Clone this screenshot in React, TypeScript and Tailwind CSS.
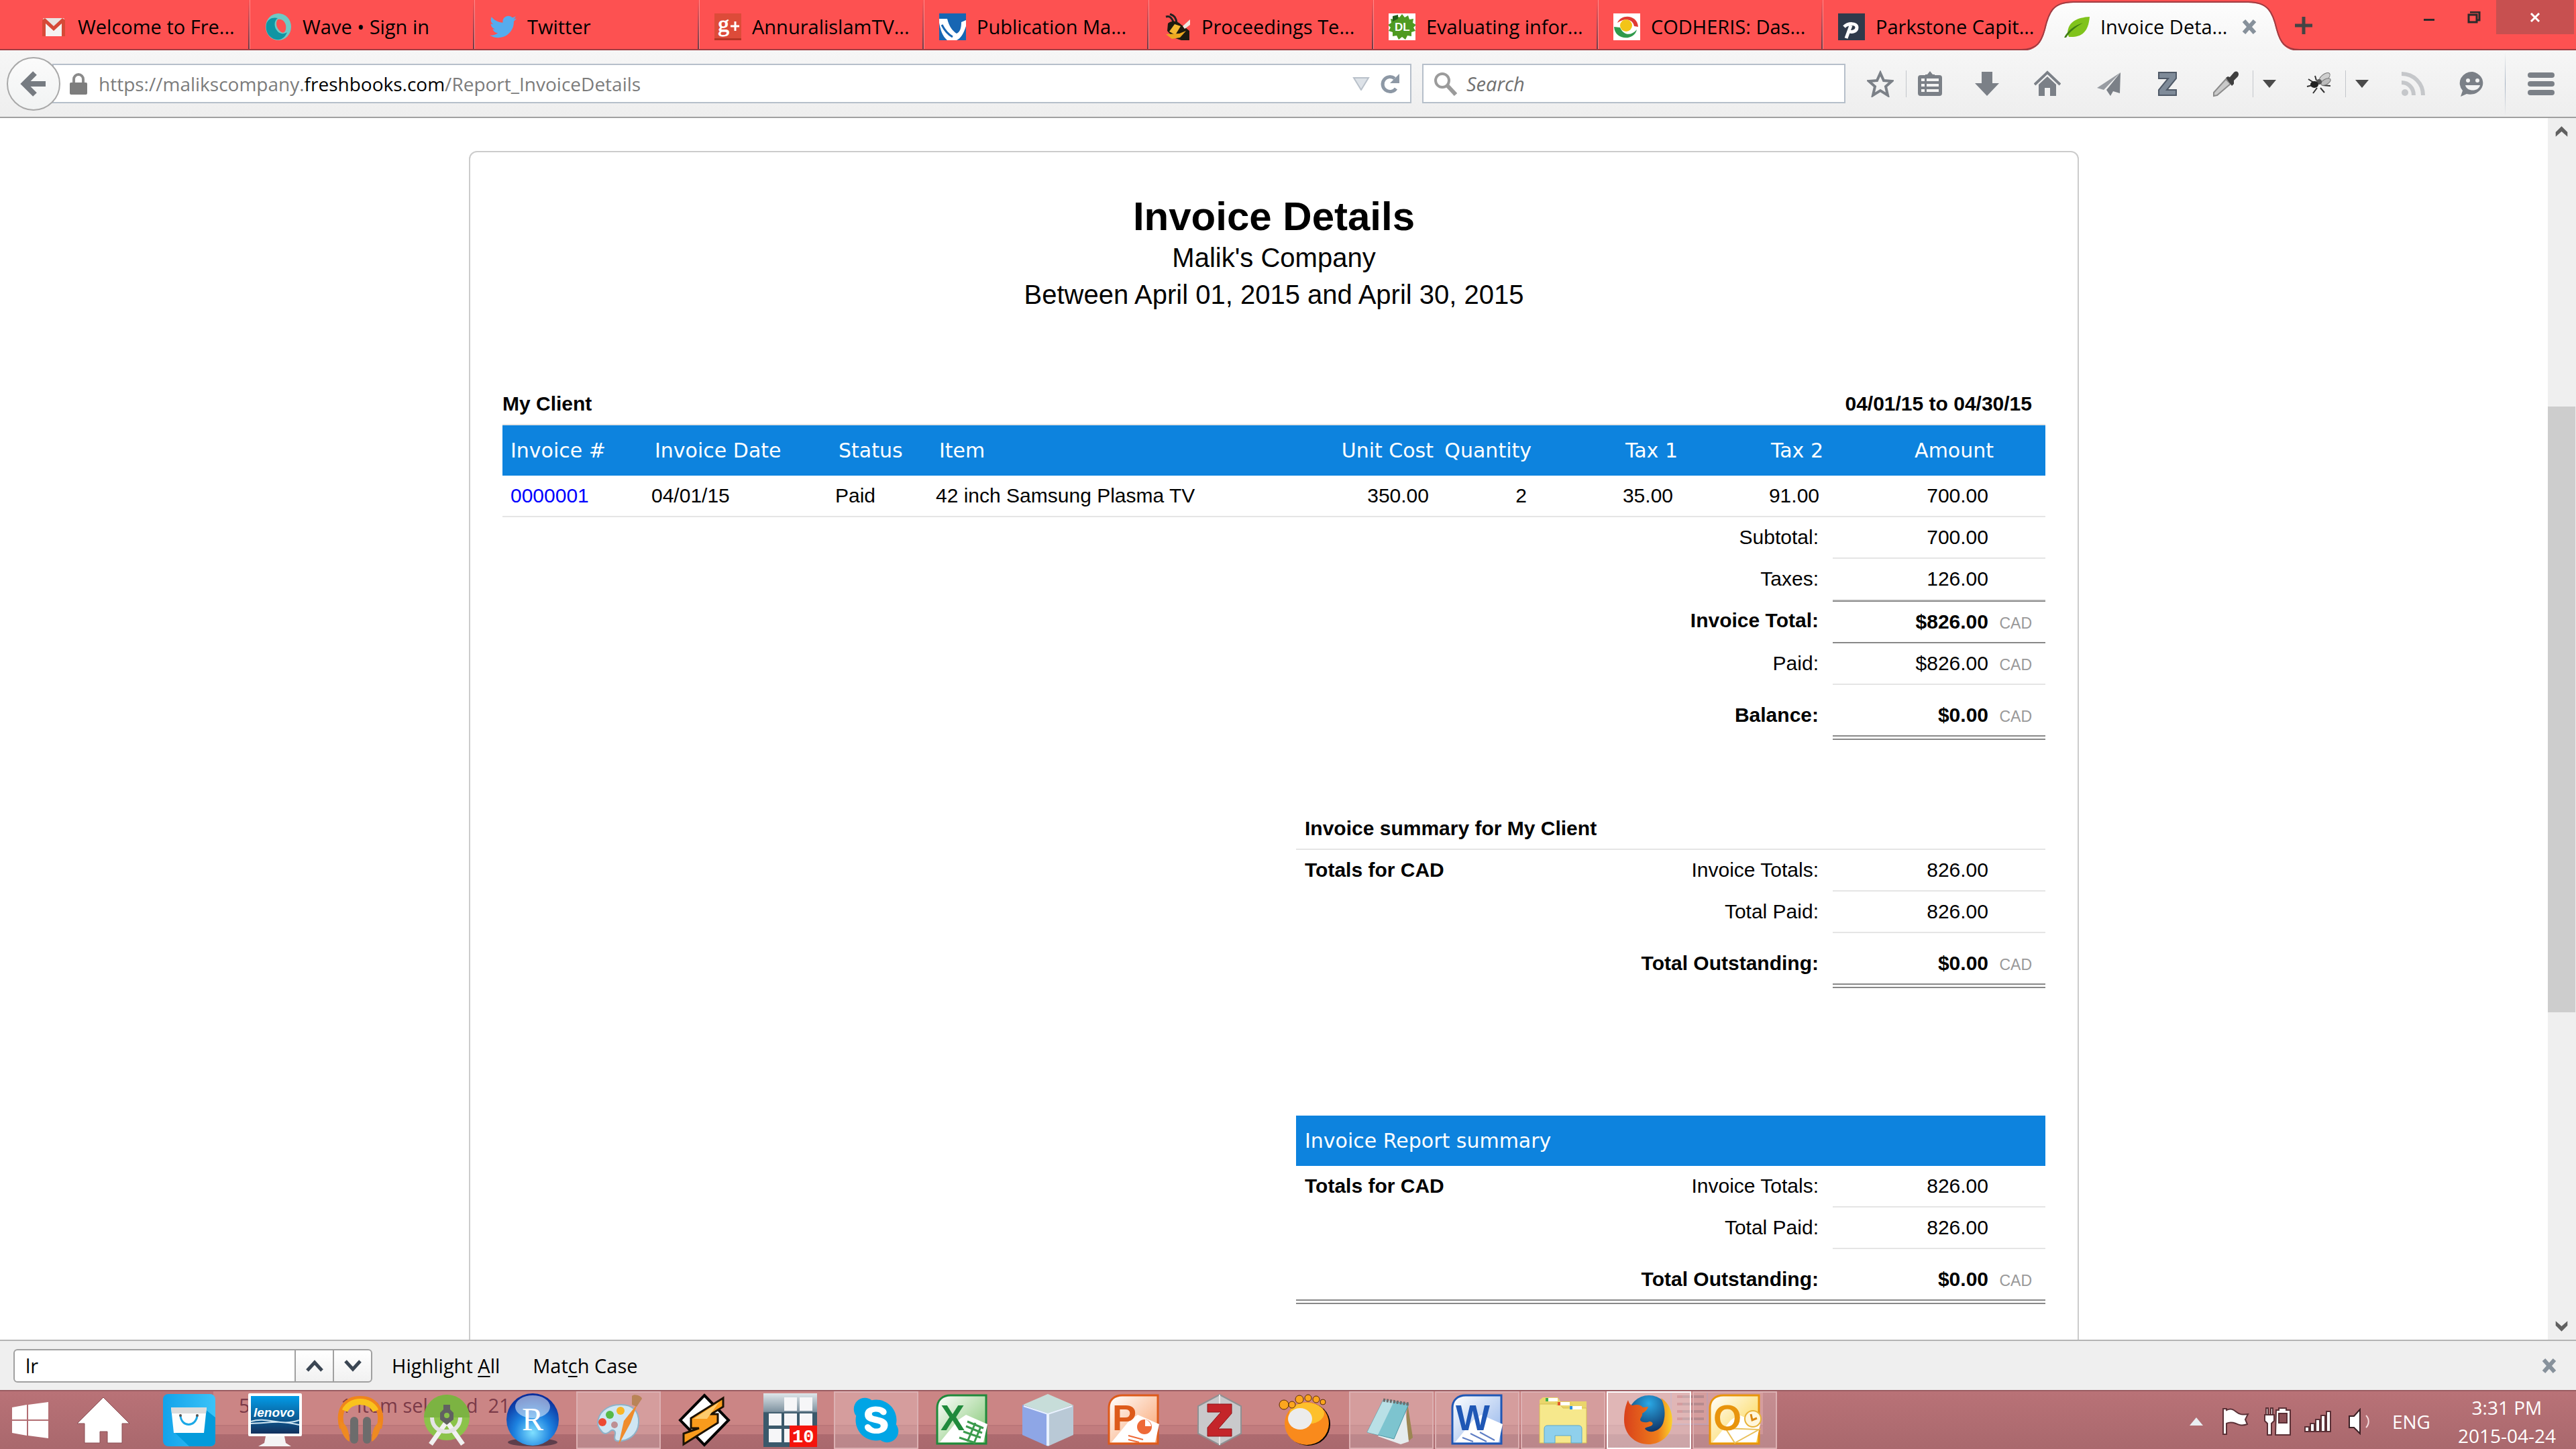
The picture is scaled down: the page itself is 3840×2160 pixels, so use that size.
import type { ReactNode } from "react";
import { FaSkype, FaTwitter } from "react-icons/fa";

const UI = "font-['Open_Sans','Segoe_UI',sans-serif]";

/* ---------- favicons ---------- */

function Fav({ children }: { children: ReactNode }) {
  return (
    <svg viewBox="0 0 40 40" className="size-10 shrink-0" aria-hidden="true">
      {children}
    </svg>
  );
}

const GmailIcon = (
  <Fav>
    <rect x="4" y="7" width="32" height="27" rx="2" fill="#e8e4e2" />
    <path d="M4 34V9l16 13L36 9v25H10V20l10 8 10-8v14z" fill="#f5f2f1" />
    <path d="M3 10l4-3 13 12L33 7l4 3v24h-5V15L20 26 8 15v19H3z" fill="#d64937" />
  </Fav>
);
const WaveIcon = (
  <Fav>
    <ellipse cx="20" cy="20" rx="19" ry="20" fill="#6fc9c5" />
    <path d="M2 16C4 8 12 5 19 7c-6 4-6 14 0 20 4 4 10 4 14 1-3 8-9 12-16 11C6 37 0 27 2 16z" fill="#0f95a3" />
    <path d="M19 9c8-2 14 6 12 15-1 5-5 6-8 3-6-5-8-13-4-18z" fill="#fd5151" />
  </Fav>
);
const GPlusIcon = (
  <Fav>
    <rect width="40" height="40" fill="#dd4b39" />
    <rect y="37" width="40" height="3" fill="#b73525" />
    <text x="5" y="27" fontFamily="Liberation Serif, serif" fontSize="34" fill="#fff" stroke="#fff">g</text>
    <path d="M24 19h13M31 12v14" stroke="#fff" strokeWidth="3" />
  </Fav>
);
const PubIcon = (
  <Fav>
    <rect width="40" height="40" fill="#1766b3" />
    <path d="M0 8h12c3 12 8 18 14 22 5-2 7-8 7-17l7-3v9c-4 12-8 18-14 21H12C5 34 2 25 0 14z" fill="#fff" />
    <path d="M4 17c4 8 9 14 16 18" stroke="#1766b3" strokeWidth="3" fill="none" />
  </Fav>
);
const BeeIcon = (
  <Fav>
    <path d="M3 5c6-2 9 2 12 10M9 1c7 2 9 6 10 13" stroke="#222" strokeWidth="3" fill="none" />
    <path d="M6 15c6-6 16-3 20 2l6 4 6 5v14H26l-12-4-9-10z" fill="#1d1a10" />
    <path d="M8 27l8-11 9 3-8 13z" fill="#f5b731" />
    <path d="M3 31l9 7 12-2 9-10-10 4z" fill="#eda81f" />
    <path d="M39 9L28 19l3 4 8-6z" fill="#ece9e2" />
  </Fav>
);
const DLIcon = (
  <Fav>
    <rect width="40" height="40" fill="#fff" />
    <path
      d="M20 1l4 5 5-3 2 6 6-1-1 6 5 3-4 4 3 5-6 2v6l-6-1-3 6-5-4-5 4-3-6-6 1v-6l-6-2 3-5-4-4 5-3-1-6 6 1 2-6 5 3z"
      fill="#4f9a22"
    />
    <path d="M6 4l8-2v6L6 12z" fill="#1f5d1b" />
    <text x="9" y="26" fontFamily="Liberation Sans, sans-serif" fontSize="17" fontWeight="700" fill="#fff">DL</text>
  </Fav>
);
const CodIcon = (
  <Fav>
    <rect width="40" height="40" fill="#fff" />
    <path d="M6 14C12 0 36 2 37 20l-6-1C29 8 17 6 6 14z" fill="#e03b34" />
    <path d="M1 20c1 20 30 22 34 4-8 10-20 9-25-3z" fill="#2f9a4c" />
    <circle cx="19" cy="18" r="9" fill="#f2c417" />
  </Fav>
);
const ParkIcon = (
  <Fav>
    <rect width="40" height="40" fill="#2f3a4b" />
    <path d="M9 20c6-6 19-6 19 1 0 6-8 8-13 5M19 18l-7 19" stroke="#fff" strokeWidth="5" fill="none" />
  </Fav>
);
const LeafIcon = (
  <Fav>
    <path d="M40 5C22 6 8 12 7 29l2 6c18 1 29-6 31-30z" fill="#80c31c" />
    <path d="M2 36C7 26 17 18 30 14 18 21 10 28 5 36z" fill="#3f7d14" />
  </Fav>
);

const TABS: { title: string; icon: ReactNode }[] = [
  { title: "Welcome to Fre...", icon: GmailIcon },
  { title: "Wave • Sign in", icon: WaveIcon },
  { title: "Twitter", icon: <FaTwitter className="size-10 shrink-0 text-[#55acee]" /> },
  { title: "AnnuralislamTV...", icon: GPlusIcon },
  { title: "Publication Ma...", icon: PubIcon },
  { title: "Proceedings Te...", icon: BeeIcon },
  { title: "Evaluating infor...", icon: DLIcon },
  { title: "CODHERIS: Das...", icon: CodIcon },
  { title: "Parkstone Capit...", icon: ParkIcon },
];

function CloseX() {
  return (
    <svg viewBox="0 0 24 24" className="size-6" aria-hidden="true">
      <path d="M4 3l16 18M20 3L4 21" stroke="#87919b" strokeWidth="6" />
    </svg>
  );
}

function TabStrip() {
  return (
    <header className="flex h-[75px] shrink-0 border-b-2 border-[#a03c42] bg-[#fd5151] pl-[38px]">
      <div className="flex" role="tablist">
        {TABS.map((t, i) => (
          <button key={t.title} role="tab" aria-selected="false" className="flex w-[335px] items-stretch">
            <span className="flex h-[80px] flex-1 items-center gap-4 pl-[22px] text-[29px] whitespace-nowrap text-black">
              {t.icon}
              {t.title}
            </span>
            {i < TABS.length - 1 && (
              <span className="h-[73px] w-[3px] border-r border-[#ff8a8a] bg-linear-to-b from-[#fd5151] via-[#b04a55] to-[#6b3c48]" />
            )}
          </button>
        ))}
        <div role="tab" aria-selected="true" className="relative z-10 flex h-[80px] w-[335px] items-center pl-[22px]">
          <svg
            viewBox="0 0 415 76"
            preserveAspectRatio="none"
            className="absolute top-0 -left-10 h-[76px] w-[415px]"
            aria-hidden="true"
          >
            <defs>
              <linearGradient id="tabFill" x1="0" y1="0" x2="0" y2="1">
                <stop offset="0" stopColor="#fdfdfd" />
                <stop offset="1" stopColor="#f5f5f5" />
              </linearGradient>
            </defs>
            <path
              d="M0 76C24 76 31 62 36 44C42 18 48 4 78 4H338C368 4 374 18 380 44C385 62 392 76 415 76z"
              fill="url(#tabFill)"
            />
            <path
              d="M0 74C24 74 30 62 35 44C41 18 47 3 78 3H338C368 3 375 18 381 44C386 62 392 74 415 74"
              fill="none"
              stroke="#a03c42"
              strokeWidth="2"
            />
          </svg>
          <span className="relative flex flex-1 items-center gap-4 text-[29px] whitespace-nowrap text-black">
            {LeafIcon}
            Invoice Deta...
          </span>
          <button aria-label="Close tab" className="relative mr-[23px]">
            <CloseX />
          </button>
        </div>
      </div>
      <button aria-label="New tab" className="ml-[32px] flex h-[76px] items-center">
        <svg viewBox="0 0 28 28" className="size-7" aria-hidden="true">
          <path d="M14 1v26M1 14h26" stroke="#444" strokeWidth="5" />
        </svg>
      </button>
      <div className="ml-auto flex h-[51px] pr-[3px]">
        <button aria-label="Minimize" className="flex w-[68px] items-center justify-center pt-2">
          <span className="h-[3px] w-4 bg-[#2a2a2a]" />
        </button>
        <button aria-label="Restore" className="flex w-[66px] items-center justify-center">
          <svg viewBox="0 0 20 18" className="h-[18px] w-5" aria-hidden="true">
            <path d="M4 1h14v12h-3M2 5h12v11H2z" fill="none" stroke="#2a2a2a" strokeWidth="3" />
          </svg>
        </button>
        <button aria-label="Close window" className="flex w-[116px] items-center justify-center bg-[#c75050]">
          <svg viewBox="0 0 16 14" className="h-[14px] w-4" aria-hidden="true">
            <path d="M2 1l12 12M14 1L2 13" stroke="#fff" strokeWidth="3" />
          </svg>
        </button>
      </div>
    </header>
  );
}

/* ---------- navigation bar ---------- */

const G = "#7b8087";

function Tool({ label, width, children }: { label: string; width: string; children: ReactNode }) {
  return (
    <button aria-label={label} className={`flex h-full shrink-0 items-center justify-center ${width}`}>
      <svg viewBox="0 0 40 40" className="size-10" aria-hidden="true">
        {children}
      </svg>
    </button>
  );
}

function Divider() {
  return <span className="h-10 w-px shrink-0 bg-[#c3c6cb]" />;
}

function Caret({ label }: { label: string }) {
  return (
    <button aria-label={label} className="flex h-full w-[47px] items-center justify-center">
      <svg viewBox="0 0 20 12" className="h-3 w-5" aria-hidden="true">
        <path d="M0 0h20L10 12z" fill="#4a4a4a" />
      </svg>
    </button>
  );
}

function NavBar() {
  return (
    <nav className="flex h-[101px] shrink-0 items-center border-b-2 border-[#a0a0a0] bg-linear-to-b from-[#f6f6f6] to-[#eeeeee]">
      <button
        aria-label="Back"
        className="relative z-10 ml-[10px] flex size-20 shrink-0 items-center justify-center rounded-full border-2 border-[#a8a8a8] bg-linear-to-b from-[#fbfbfb] to-[#f1f3f3]"
      >
        <svg viewBox="0 0 40 40" className="size-10" aria-hidden="true">
          <path d="M38 20H8M22 4L6 20l16 16" stroke="#767b81" strokeWidth="8" fill="none" />
        </svg>
      </button>
      <div className="-ml-3 flex h-[59px] flex-1 items-center border-2 border-[#b6bfca] bg-white pr-[14px] pl-[24px]">
        <svg viewBox="0 0 26 32" className="h-8 w-[26px] shrink-0" aria-hidden="true">
          <path d="M6 16V9a7 7 0 0114 0v7" fill="none" stroke="#8a8a8a" strokeWidth="4" />
          <rect y="14" width="26" height="18" rx="2" fill="#7d7d7d" />
        </svg>
        <div
          role="textbox"
          aria-label="Address"
          tabIndex={0}
          className="ml-[17px] flex-1 text-[28px] leading-[54px] whitespace-nowrap text-[#7c7c7c]"
        >
          https://malikscompany.<span className="text-black">freshbooks.com</span>/Report_InvoiceDetails
        </div>
        <button aria-label="Show history" className="mr-[14px]">
          <svg viewBox="0 0 26 20" className="h-5 w-[26px]" aria-hidden="true">
            <path d="M2 1h22L13 19z" fill="#dde2e8" stroke="#b9c1ca" strokeWidth="2" />
          </svg>
        </button>
        <button aria-label="Reload">
          <svg viewBox="0 0 32 32" className="size-8" aria-hidden="true">
            <path d="M25 23A11 11 0 1123 8" fill="none" stroke="#8d98a5" strokeWidth="5" />
            <path d="M30 1v14H16z" fill="#8d98a5" />
          </svg>
        </button>
      </div>
      <div className="ml-4 flex h-[59px] w-[631px] shrink-0 items-center border-2 border-[#b6bfca] bg-white pl-[14px]">
        <svg viewBox="0 0 36 36" className="size-9 shrink-0" aria-hidden="true">
          <circle cx="14" cy="13" r="10" fill="none" stroke="#9b9b9b" strokeWidth="4" />
          <path d="M21 20l13 14" stroke="#9b9b9b" strokeWidth="6" />
        </svg>
        <input
          type="search"
          aria-label="Search"
          placeholder="Search"
          className="ml-[14px] min-w-0 flex-1 bg-transparent text-[29px] italic outline-none placeholder:text-[#707070]"
        />
      </div>
      <div className="flex h-full shrink-0 items-center pl-[14px]">
        <Tool label="Bookmark" width="w-[76px]">
          <path d="M20 4l5 11 12 1-9 8 3 13-11-7-11 7 3-13-9-8 12-1z" fill="none" stroke={G} strokeWidth="4" />
        </Tool>
        <Divider />
        <Tool label="Bookmarks list" width="w-[70px]">
          <path d="M13 6h3l4-5 4 5h3v4H13z" fill={G} />
          <rect x="2" y="7" width="36" height="31" rx="4" fill={G} />
          <path d="M7 14h5M15 14h18M7 22h5M15 22h18M7 30h5M15 30h18" stroke="#f3f3f3" strokeWidth="4" />
        </Tool>
        <Tool label="Downloads" width="w-[100px]">
          <path d="M12 2h16v17h10L20 38 2 19h10z" fill={G} />
        </Tool>
        <Tool label="Home" width="w-20">
          <path d="M1 21L20 3l19 18" fill="none" stroke={G} strokeWidth="4" />
          <path d="M7 21L20 9l13 12v17h-9V26h-8v12H7z" fill={G} />
        </Tool>
        <Tool label="Share" width="w-[104px]">
          <path d="M37 3L2 26l10 3z" fill="#989ca2" />
          <path d="M37 3L16 29l6 9 4-7 10 3z" fill={G} />
        </Tool>
        <button aria-label="Zotero" className="flex h-full w-[70px] items-center justify-center">
          <svg viewBox="0 0 28 36" className="h-9 w-7" aria-hidden="true">
            <path d="M1 1h26v9L13 27h14v8H1v-8l14-17H1z" fill="#7f8b99" stroke="#4f5967" strokeWidth="2" />
          </svg>
        </button>
        <Tool label="Color picker" width="ml-3 w-20">
          <path d="M2 38v-5l18-20 7 7L7 37z" fill="#c9c9c9" stroke="#8b8b8b" strokeWidth="2" />
          <path d="M20 11l3-2 3 1 6-7c5-4 9 1 6 6l-6 6v5l-3 3z" fill="#3f3f3f" />
        </Tool>
        <Divider />
        <Caret label="Color picker menu" />
        <Tool label="Firebug" width="ml-3 w-[78px]">
          <path d="M4 13l8 5M2 24l8-2M11 34l6-8M25 22l12 1M22 26l6 7M14 8l2 7" stroke="#333" strokeWidth="2" />
          <ellipse cx="28" cy="11" rx="10" ry="5" transform="rotate(-40 28 11)" fill="#cfcfcf" stroke="#777" />
          <ellipse cx="30" cy="17" rx="8" ry="4" transform="rotate(-30 30 17)" fill="#bcbcbc" stroke="#777" />
          <ellipse cx="20" cy="17" rx="4" ry="4" fill="#555" />
          <ellipse cx="13" cy="21" rx="6" ry="5" fill="#222" />
        </Tool>
        <Divider />
        <Caret label="Firebug menu" />
        <Tool label="Subscribe" width="w-[105px]">
          <circle cx="8" cy="33" r="5" fill="#c5c7ca" />
          <path d="M3 18c10 0 18 8 18 19M3 5c18 0 32 14 32 32" fill="none" stroke="#c5c7ca" strokeWidth="6" />
        </Tool>
        <Tool label="Hello" width="w-[74px]">
          <path d="M20 2a19 17 0 11-9 33l-9 4 3-9A18 17 0 0120 2z" fill={G} />
          <circle cx="13" cy="15" r="3" fill="#f3f3f3" />
          <circle cx="27" cy="15" r="3" fill="#f3f3f3" />
          <path d="M9 22h22c-2 10-20 10-22 0z" fill="#f3f3f3" />
        </Tool>
        <span className="ml-[11px] h-[94px] w-px bg-linear-to-b from-transparent via-[#a3b1c2] to-transparent" />
        <button aria-label="Menu" className="flex h-full w-[105px] flex-col items-center justify-center gap-[5px]">
          <span className="h-2 w-10 rounded-sm bg-[#7b8087]" />
          <span className="h-2 w-10 rounded-sm bg-[#7b8087]" />
          <span className="h-2 w-10 rounded-sm bg-[#7b8087]" />
        </button>
      </div>
    </nav>
  );
}

/* ---------- report ---------- */

function Amount({
  value,
  currency,
  className,
}: {
  value: string;
  currency?: string;
  className: string;
}) {
  return (
    <td className={`w-[317px] pr-5 text-right align-top leading-[60px] ${className}`}>
      {value}
      <span className="inline-block w-[65px] text-right text-[23px] leading-[30px] font-normal text-[#999]">{currency}</span>
    </td>
  );
}

const LIGHT = "border-b-2 border-[#e5e5e5]";
const DOUBLE = "border-b-7 border-double border-[#888]";
const LABEL = "pr-[21px] text-right align-top leading-[60px]";

function InvoiceTable() {
  return (
    <table className="w-full table-fixed border-separate border-spacing-0 border-t-2 border-[#e5e5e5]">
      <colgroup>
        <col className="w-[210px]" />
        <col className="w-[274px]" />
        <col className="w-[150px]" />
        <col />
        <col className="w-[147px]" />
        <col className="w-[146px]" />
        <col className="w-[218px]" />
        <col className="w-[225px]" />
        <col className="w-[317px]" />
      </colgroup>
      <thead>
        <tr className="h-[75px] bg-[#0d83de] text-left font-['DejaVu_Sans',Verdana,sans-serif] whitespace-nowrap text-white *:font-normal">
          <th className="pl-3">Invoice #</th>
          <th className="pl-[17px]">Invoice Date</th>
          <th className="pl-[17px]">Status</th>
          <th className="pl-[17px]">Item</th>
          <th className="pr-[6px] text-right">Unit Cost</th>
          <th className="pr-[6px] text-right">Quantity</th>
          <th className="pr-[6px] text-right">Tax 1</th>
          <th className="pr-[14px] text-right">Tax 2</th>
          <th className="pr-[77px] text-right">Amount</th>
        </tr>
      </thead>
      <tbody>
        <tr className="leading-[60px] *:border-b-2 *:border-[#e5e5e5]">
          <td className="pl-3">
            <a href="#invoice" className="text-[#0000ff]">
              0000001
            </a>
          </td>
          <td className="pl-3">04/01/15</td>
          <td className="pl-3">Paid</td>
          <td className="pl-3">42 inch Samsung Plasma TV</td>
          <td className="pr-[13px] text-right">350.00</td>
          <td className="pr-[13px] text-right">2</td>
          <td className="pr-[13px] text-right">35.00</td>
          <td className="pr-5 text-right">91.00</td>
          <Amount value="700.00" className="" />
        </tr>
        <tr>
          <td colSpan={8} className={LABEL}>Subtotal:</td>
          <Amount value="700.00" className={LIGHT} />
        </tr>
        <tr>
          <td colSpan={8} className={LABEL}>Taxes:</td>
          <Amount value="126.00" className={LIGHT} />
        </tr>
        <tr className="font-bold">
          <td colSpan={8} className={LABEL}>Invoice Total:</td>
          <Amount value="$826.00" currency="CAD" className="border-y-2 border-[#888]" />
        </tr>
        <tr>
          <td colSpan={8} className={LABEL}>Paid:</td>
          <Amount value="$826.00" currency="CAD" className={LIGHT} />
        </tr>
        <tr className="font-bold">
          <td colSpan={8} className={`${LABEL} pt-[15px]`}>Balance:</td>
          <Amount value="$0.00" currency="CAD" className={`pt-[15px] ${DOUBLE}`} />
        </tr>
      </tbody>
    </table>
  );
}

function SummaryTable({ title, banner }: { title: string; banner?: boolean }) {
  return (
    <table className="ml-auto w-[1117px] table-fixed border-separate border-spacing-0">
      <colgroup>
        <col className="w-[400px]" />
        <col />
        <col className="w-[317px]" />
      </colgroup>
      <thead>
        <tr>
          {banner ? (
            <th
              colSpan={3}
              className="h-[75px] bg-[#0d83de] pl-[13px] text-left font-['DejaVu_Sans',Verdana,sans-serif] font-normal text-white"
            >
              {title}
            </th>
          ) : (
            <th colSpan={3} className={`pl-[13px] text-left leading-[60px] font-bold ${LIGHT}`}>
              {title}
            </th>
          )}
        </tr>
      </thead>
      <tbody>
        <tr>
          <td className="pl-[13px] align-top leading-[60px] font-bold">Totals for CAD</td>
          <td className={LABEL}>Invoice Totals:</td>
          <Amount value="826.00" className={LIGHT} />
        </tr>
        <tr>
          <td />
          <td className={LABEL}>Total Paid:</td>
          <Amount value="826.00" className={LIGHT} />
        </tr>
        <tr className="font-bold">
          <td className={banner ? DOUBLE : ""} />
          <td className={`${LABEL} pt-[15px] ${banner ? DOUBLE : ""}`}>Total Outstanding:</td>
          <Amount value="$0.00" currency="CAD" className={`pt-[15px] ${DOUBLE}`} />
        </tr>
      </tbody>
    </table>
  );
}

function Report() {
  return (
    <main className="flex min-h-0 flex-1 bg-white">
      <div className="min-w-0 flex-1 overflow-hidden font-['Liberation_Sans',Arial,sans-serif] text-[30px] text-black">
        <article className="mx-auto mt-[49px] w-full max-w-[2400px] rounded-xl border-2 border-[#ccc] px-12 pt-[62px] pb-[300px]">
          <div className="text-center text-[40px] leading-[55px]">
            <h1 className="text-6xl leading-[68px] font-bold">Invoice Details</h1>
            <p>Malik's Company</p>
            <p>Between April 01, 2015 and April 30, 2015</p>
          </div>
          <div className="mt-[105px] flex justify-between pr-5 leading-[60px] font-bold">
            <h2>My Client</h2>
            <p>04/01/15 to 04/30/15</p>
          </div>
          <InvoiceTable />
          <div className="mt-[102px]">
            <SummaryTable title="Invoice summary for My Client" />
          </div>
          <div className="mt-[190px]">
            <SummaryTable title="Invoice Report summary" banner />
          </div>
        </article>
      </div>
      <div className="flex w-[42px] shrink-0 flex-col bg-[#efefef] pr-px" aria-hidden="true">
        <svg viewBox="0 0 42 42" className="h-[42px] w-full">
          <path d="M12 21l9-9 9 9v7l-9-8-9 8z" fill="#606060" />
        </svg>
        <div className="h-[388px]" />
        <div className="h-[903px] bg-[#cdcdcd]" />
        <div className="flex-1" />
        <svg viewBox="0 0 42 42" className="h-[42px] w-full">
          <path d="M12 21l9 9 9-9v-7l-9 8-9-8z" fill="#606060" />
        </svg>
      </div>
    </main>
  );
}

/* ---------- find bar ---------- */

function FindBar() {
  return (
    <section
      aria-label="Find in page"
      className="flex h-[75px] shrink-0 items-center border-t-2 border-[#b4b4b4] bg-[#efefef] pr-7 pl-[20px] text-[29px] text-black"
    >
      <input
        aria-label="Find"
        defaultValue="lr"
        className="h-[50px] w-[421px] rounded-l-md border-2 border-[#a0a0a0] bg-white pl-4 outline-none"
      />
      <button aria-label="Previous" className="-ml-0.5 flex h-[50px] w-[59px] items-center justify-center border-2 border-[#a0a0a0] bg-linear-to-b from-white to-[#f1f1f1]">
        <svg viewBox="0 0 26 18" className="h-[18px] w-[26px]" aria-hidden="true">
          <path d="M2 16L13 4l11 12" fill="none" stroke="#3b4653" strokeWidth="5" />
        </svg>
      </button>
      <button aria-label="Next" className="-ml-0.5 flex h-[50px] w-[59px] items-center justify-center rounded-r-md border-2 border-[#a0a0a0] bg-linear-to-b from-white to-[#f1f1f1]">
        <svg viewBox="0 0 26 18" className="h-[18px] w-[26px]" aria-hidden="true">
          <path d="M2 2l11 12L24 2" fill="none" stroke="#3b4653" strokeWidth="5" />
        </svg>
      </button>
      <button className="ml-[29px]">
        Highlight <span className="underline underline-offset-4">A</span>ll
      </button>
      <button className="ml-[49px]">
        Mat<span className="underline underline-offset-4">c</span>h Case
      </button>
      <button aria-label="Close find bar" className="ml-auto">
        <CloseX />
      </button>
    </section>
  );
}

/* ---------- taskbar ---------- */

function Ico({ children }: { children: ReactNode }) {
  return (
    <svg viewBox="0 0 80 80" className="size-20" aria-hidden="true">
      {children}
    </svg>
  );
}

function OfficeDoc({ id, dark, light, letter, children }: { id: string; dark: string; light: string; letter: string; children: ReactNode }) {
  return (
    <Ico>
      <defs>
        <linearGradient id={id} x1="0" y1="0" x2="1" y2="1">
          <stop offset="0" stopColor="#fff" />
          <stop offset="1" stopColor={light} />
        </linearGradient>
      </defs>
      <path d="M3 75V22C3 10 11 3 23 3h53v72z" fill={`url(#${id})`} stroke={dark} strokeWidth="3" />
      <path d="M34 40l12-8 32 14-6 27H7z" fill="#fff" />
      {children}
      <text x="8" y="55" fontFamily="Liberation Sans, sans-serif" fontSize="54" fontWeight="700" fill={dark}>
        {letter}
      </text>
    </Ico>
  );
}

const APPS: { name: string; state?: "open" | "active"; icon: ReactNode }[] = [
  {
    name: "Home",
    icon: (
      <Ico>
        <path d="M40 6L79 45H68v29H46V57H35v17H12V45H1z" fill="#fff" stroke="#8b4f55" strokeWidth="1" />
      </Ico>
    ),
  },
  {
    name: "Store",
    icon: (
      <Ico>
        <defs>
          <linearGradient id="store" x1="0" y1="0" x2="1" y2="0">
            <stop offset="0" stopColor="#12a3ea" />
            <stop offset="1" stopColor="#3cc3f8" />
          </linearGradient>
        </defs>
        <rect x="1" y="1" width="78" height="78" rx="8" fill="url(#store)" />
        <path d="M64 24l15 12v35q0 8-8 8H40L18 58z" fill="#039bdb" />
        <path d="M13 21h53l-4 38H17z" fill="#fdfdfd" />
        <path d="M13 21h53l-1 9H14z" fill="#dcdcdc" />
        <path d="M27 33c1 18 23 18 25 0" fill="none" stroke="#1aa8e6" strokeWidth="3" />
        <circle cx="27" cy="33" r="2" fill="#555" />
        <circle cx="52" cy="33" r="2" fill="#555" />
      </Ico>
    ),
  },
  {
    name: "Lenovo",
    icon: (
      <Ico>
        <defs>
          <linearGradient id="len" x1="0" y1="0" x2="0" y2="1">
            <stop offset="0" stopColor="#029ce8" />
            <stop offset="1" stopColor="#12305c" />
          </linearGradient>
        </defs>
        <rect width="80" height="64" rx="2" fill="#fff" />
        <rect x="4" y="4" width="72" height="56" fill="url(#len)" />
        <path d="M4 42c24-8 44 8 72-2M4 45c26 0 40-6 72 2" fill="none" stroke="#cfe6f2" strokeWidth="2" />
        <text x="8" y="35" fontFamily="Liberation Sans, sans-serif" fontSize="19" fontWeight="700" fontStyle="italic" fill="#fff">
          lenovo
        </text>
        <path d="M26 64h28l2 10 8 5H15l9-5z" fill="#f4f4f4" />
      </Ico>
    ),
  },
  {
    name: "Play Music",
    icon: (
      <Ico>
        <path d="M12 52C4 24 18 8 39 8s36 16 28 44" fill="none" stroke="#f0851c" strokeWidth="8" />
        <path d="M16 26C24 8 54 8 62 26" fill="none" stroke="#f9c21d" strokeWidth="9" />
        <path d="M9 42c8 2 14 12 14 30-8-4-14-16-14-30zM70 42c-8 2-14 12-14 30 8-4 14-16 14-30z" fill="#ee8a22" />
        <rect x="24" y="35" width="12" height="40" rx="6" fill="#6c6c6c" />
        <rect x="43" y="35" width="12" height="40" rx="6" fill="#6c6c6c" />
      </Ico>
    ),
  },
  {
    name: "Android Studio",
    icon: (
      <Ico>
        <circle cx="40" cy="36" r="34" fill="#8bc34a" />
        <path d="M6 36a34 34 0 0168 0z" fill="#7cb342" />
        <path d="M40 42L16 76M40 42l24 34" stroke="#f1f1f1" strokeWidth="7" />
        <path d="M18 36c0 28 42 28 42 0" fill="none" stroke="#e4e4e4" strokeWidth="6" />
        <path d="M35 17h10v7l5 5v10l-10 8-10-8V29l5-5z" fill="#616161" />
        <circle cx="40" cy="33" r="4" fill="#8bc34a" />
      </Ico>
    ),
  },
  {
    name: "R",
    icon: (
      <Ico>
        <defs>
          <radialGradient id="rb" cx="0.5" cy="0.75" r="0.7">
            <stop offset="0" stopColor="#7fe0ff" />
            <stop offset="0.5" stopColor="#1d82e0" />
            <stop offset="1" stopColor="#0a2f9c" />
          </radialGradient>
        </defs>
        <ellipse cx="40" cy="73" rx="37" ry="6" fill="#5d3e4b" />
        <circle cx="40" cy="39" r="39" fill="url(#rb)" />
        <ellipse cx="40" cy="20" rx="26" ry="17" fill="#fff" opacity="0.5" />
        <text x="40" y="55" textAnchor="middle" fontFamily="Liberation Serif, serif" fontSize="48" fill="#fff">R</text>
      </Ico>
    ),
  },
  {
    name: "Paint",
    state: "open",
    icon: (
      <Ico>
        <path
          d="M42 17C60 16 71 26 70 44c-1 18-16 28-32 27-5-1-4-6-3-10 1-5-3-8-7-5-3 3-8 6-12 2-6-6-9-12-6-20C14 24 28 17 42 17z"
          fill="#cfe6f3"
          stroke="#8db2c8"
          strokeWidth="2"
        />
        <circle cx="16" cy="43" r="6" fill="#ec4a33" />
        <circle cx="27" cy="32" r="6" fill="#57b947" />
        <circle cx="43" cy="26" r="6" fill="#f9b527" />
        <circle cx="34" cy="47" r="5" fill="#bd8f93" />
        <path d="M68 16L58 44 40 77l8-36z" fill="#ef8c2c" />
        <path d="M60 4c4-4 14 0 15 4l-8 12-7-3z" fill="#b98457" />
      </Ico>
    ),
  },
  {
    name: "Winamp",
    icon: (
      <Ico>
        <path d="M40 3l36 37-36 37L4 40z" fill="#fff" stroke="#000" strokeWidth="4" />
        <path d="M68 7L20 37v15h12L9 60v16l51-32V31H50L68 20z" fill="#f99b1c" stroke="#1c1204" strokeWidth="3" />
        <path d="M62 13L24 38h20z" fill="#fdcb6e" />
      </Ico>
    ),
  },
  {
    name: "Calendar",
    icon: (
      <Ico>
        <defs>
          <linearGradient id="cal" x1="0" y1="0" x2="0" y2="1">
            <stop offset="0" stopColor="#dfe6ea" />
            <stop offset="0.34" stopColor="#7f93a1" />
            <stop offset="0.36" stopColor="#3b596b" />
            <stop offset="1" stopColor="#3b596b" />
          </linearGradient>
        </defs>
        <rect width="80" height="80" fill="url(#cal)" />
        <path d="M31 6h19v20H31zM54 6h19v20H54zM8 30h19v18H8zM31 30h19v18H31zM54 30h19v18H54zM8 53h19v20H8zM31 53h19v20H31z" fill="#f6f6f8" />
        <rect x="39" y="48" width="41" height="32" fill="#f4140c" />
        <text x="43" y="73" fontFamily="Liberation Mono, monospace" fontSize="27" fontWeight="700" fill="#fff">10</text>
      </Ico>
    ),
  },
  {
    name: "Skype",
    state: "open",
    icon: (
      <span className="relative flex size-20 items-center justify-center">
        <span className="absolute size-12 rounded-full bg-white" />
        <FaSkype className="relative size-[76px] text-[#00a5e5]" />
      </span>
    ),
  },
  {
    name: "Excel",
    icon: (
      <OfficeDoc id="xl" dark="#1f8a3b" light="#7cc46c" letter="X">
        <path d="M48 42l24 10M46 49l24 10M42 57l26 9M36 66l24 8M60 44l-12 28M68 50l-10 24" stroke="#3b9b4d" strokeWidth="3" />
      </OfficeDoc>
    ),
  },
  {
    name: "VirtualBox",
    icon: (
      <Ico>
        <path d="M40 1l37 16-37 14L3 17z" fill="#c7ddd9" />
        <path d="M2 17l38 13v49L2 62z" fill="#8ea6e6" />
        <path d="M78 17L40 30v49l38-17z" fill="#b9c9d6" />
        <path d="M40 30v48" stroke="#eaf2ff" strokeWidth="4" />
        <path d="M4 19l36 12 36-12" fill="none" stroke="#eaf2ff" strokeWidth="2" />
      </Ico>
    ),
  },
  {
    name: "PowerPoint",
    icon: (
      <OfficeDoc id="pp" dark="#dd5a1a" light="#f9a06a" letter="P">
        <circle cx="56" cy="50" r="11" fill="#ee6a38" />
        <path d="M57 49V39a11 11 0 019 10z" fill="#fff" />
        <path d="M32 63l22 6M32 69l16 4" stroke="#ee6a38" strokeWidth="2" />
      </OfficeDoc>
    ),
  },
  {
    name: "Zotero",
    icon: (
      <Ico>
        <path d="M40 2l32 17v41L40 77 8 60V19z" fill="#c9c9cb" stroke="#8f9092" strokeWidth="2" />
        <path d="M40 2v75" stroke="#e9e9e9" strokeWidth="2" />
        <path d="M22 16h36v14L38 53h20v11H22V51l20-23H22z" fill="#c4252a" stroke="#8c1518" />
      </Ico>
    ),
  },
  {
    name: "Gom",
    icon: (
      <Ico>
        <ellipse cx="44" cy="46" rx="33" ry="32" fill="#000" />
        <ellipse cx="42" cy="45" rx="33" ry="32" fill="#f98a1c" />
        <ellipse cx="42" cy="30" rx="26" ry="16" fill="#fdc02c" />
        <ellipse cx="32" cy="38" rx="18" ry="16" fill="#ececec" />
        <circle cx="8" cy="17" r="7" fill="#fca61f" stroke="#5b2c00" />
        <circle cx="20" cy="17" r="5" fill="#fca61f" stroke="#5b2c00" />
        <circle cx="31" cy="9" r="6" fill="#fca61f" stroke="#5b2c00" />
        <circle cx="44" cy="7" r="5" fill="#fca61f" stroke="#5b2c00" />
        <circle cx="56" cy="9" r="5" fill="#fca61f" stroke="#5b2c00" />
        <circle cx="66" cy="13" r="4" fill="#fca61f" stroke="#5b2c00" />
      </Ico>
    ),
  },
  {
    name: "Notepad",
    state: "open",
    icon: (
      <Ico>
        <path d="M64 14l8 52-5 4-6-4z" fill="#9c8652" />
        <path d="M60 16l6 56-12 4-34-12z" fill="#e6ecee" />
        <path d="M28 10l38 6-22 52L4 58z" fill="#7dc4cf" stroke="#4b97a4" />
        <path d="M28 10l16 2-24 50-16-4z" fill="#b9e0e6" />
        <path d="M28 10l38 6" stroke="#6b6b6b" strokeWidth="5" strokeDasharray="3 2" />
      </Ico>
    ),
  },
  {
    name: "Word",
    state: "open",
    icon: (
      <OfficeDoc id="wd" dark="#1f57b5" light="#8fb2ea" letter="W">
        <path d="M18 66l16 6M30 60l24 12M44 58l22 12" stroke="#5f7ec4" strokeWidth="2" />
      </OfficeDoc>
    ),
  },
  {
    name: "File Explorer",
    state: "open",
    icon: (
      <Ico>
        <path d="M5 10l5-4h22l4 6h39v60H5z" fill="#ead56b" />
        <path d="M5 16h30l5 6h35v52H5z" fill="#f6e88c" stroke="#d5bd52" />
        <rect x="14" y="7" width="18" height="5" fill="#fff" />
        <rect x="14" y="7" width="4" height="5" fill="#3fae49" />
        <path d="M28 12h24l4 6h-26z" fill="#e8d060" />
        <rect x="32" y="13" width="18" height="5" fill="#fff" />
        <rect x="32" y="13" width="4" height="5" fill="#e2552b" />
        <rect x="50" y="19" width="18" height="5" fill="#fff" />
        <rect x="50" y="19" width="4" height="5" fill="#2b8fe2" />
        <path d="M12 74V53q0-5 5-5h46q5 0 5 5v21H52V63H28v11z" fill="#8fd0ec" stroke="#5aa7cc" />
      </Ico>
    ),
  },
  {
    name: "Firefox",
    state: "active",
    icon: (
      <Ico>
        <defs>
          <radialGradient id="fx" cx="0.5" cy="0.2" r="0.8">
            <stop offset="0" stopColor="#2aa9e6" />
            <stop offset="1" stopColor="#0b1f50" />
          </radialGradient>
          <linearGradient id="fxo" x1="0" y1="0" x2="1" y2="0">
            <stop offset="0" stopColor="#d9411c" />
            <stop offset="0.7" stopColor="#ee7d1b" />
            <stop offset="1" stopColor="#fbd22c" />
          </linearGradient>
        </defs>
        <circle cx="40" cy="34" r="31" fill="url(#fx)" />
        <path
          d="M9 10c1 5 4 8 7 8 6-2 12-1 15 3l8-1c-2 6-6 8-9 10 1 4-3 6-3 10 2 4 10 4 14 2 5 0 7 5 1 7-4 2-7 1-8 4 7 8 22 4 27-8 5-14 2-28-3-38 14 8 20 28 15 46C68 67 54 76 40 76 18 76 3 60 3 40 3 28 5 18 9 10z"
          fill="url(#fxo)"
        />
      </Ico>
    ),
  },
  {
    name: "Outlook",
    state: "open",
    icon: (
      <OfficeDoc id="ol" dark="#e8940c" light="#fbd03a" letter="O">
        <path d="M26 52l50 2-36 20z" fill="#fff" stroke="#e9c05a" strokeWidth="2" />
        <circle cx="67" cy="38" r="12" fill="#fff6da" stroke="#e8b33a" strokeWidth="2" />
        <path d="M64 31l2 9 7-3" fill="none" stroke="#d9860f" strokeWidth="3" />
      </OfficeDoc>
    ),
  },
];

const STATE = {
  idle: "border-transparent",
  open: "border-[#dcb0b2] bg-white/20",
  active: "border-white bg-white/40",
};

function Taskbar() {
  return (
    <footer className="relative flex h-[88px] shrink-0 items-stretch overflow-hidden border-t-2 border-[#9a5d62] bg-linear-to-b from-[#b97277] to-[#a9686d] text-white">
      <div className="absolute inset-y-0 left-[318px] w-[2310px]" aria-hidden="true">
        <div className="h-[50px] bg-[#cb8585]" />
        <div className="h-[14px] border-t-2 border-[#bb7679] bg-[#c27c7e]" />
        <div className="absolute top-[-1px] left-[38px] text-[29px] leading-[44px] whitespace-pre text-[#7b3a48]">5</div>
        <div className="absolute top-[-1px] left-[190px] text-[29px] leading-[44px] whitespace-pre text-[#7b3a48]">
          1 item selected  21.7
        </div>
        <div className="absolute top-0 left-[2172px] flex h-[50px] w-[56px] flex-col justify-center gap-[7px] border-2 border-t-0 border-[#a98aa6] pl-2 opacity-70">
          <span className="h-1 w-10 border-l-8 border-[#b04a50] bg-[#94646b]" />
          <span className="h-1 w-10 border-l-8 border-[#b04a50] bg-[#94646b]" />
          <span className="h-1 w-10 border-l-8 border-[#b04a50] bg-[#94646b]" />
          <span className="h-1 w-10 border-l-8 border-[#b04a50] bg-[#94646b]" />
        </div>
      </div>
      <button aria-label="Start" className="relative flex w-[90px] items-center justify-center">
        <svg viewBox="0 0 54 54" className="size-[54px]" aria-hidden="true">
          <path d="M0 8l22-4v22H0zM24 4l30-4v26H24zM0 28h22v22L0 46zM24 28h30v26l-30-4z" fill="#fff" />
        </svg>
      </button>
      <div className="relative flex">
        {APPS.map((a) => (
          <button
            key={a.name}
            aria-label={a.name}
            className={`mx-px flex w-[126px] items-center justify-center border-2 ${STATE[a.state ?? "idle"]}`}
          >
            {a.icon}
          </button>
        ))}
      </div>
      <div className="relative ml-auto flex items-center pt-1 pr-[30px] text-[28px] leading-[42px]">
        <button aria-label="Show hidden icons" className="mr-[28px]">
          <svg viewBox="0 0 20 12" className="h-3 w-5" aria-hidden="true">
            <path d="M10 0l10 12H0z" fill="#e9eef2" />
          </svg>
        </button>
        <button aria-label="Action center" className="mr-[20px]">
          <svg viewBox="0 0 42 42" className="size-[42px]" aria-hidden="true">
            <path d="M2 2h5v2c7-3 10-1 15 3 5 4 8 4 17 3l-4 8 3 7c-8 3-12 1-17-1-6-2-10-2-14 0v16H2z" fill="#fff" stroke="#5a3036" strokeWidth="2" />
          </svg>
        </button>
        <button aria-label="Power" className="mr-[18px]">
          <svg viewBox="0 0 42 42" className="size-[42px]" aria-hidden="true">
            <path d="M4 1h3v10H4zM11 1h3v10h-3zM2 11h14v9l-4 4v17H6V24l-4-4z" fill="#fff" stroke="#5a3036" strokeWidth="2" />
            <path d="M19 4h4V1h11v3h6v37H18z" fill="#fff" stroke="#5a3036" strokeWidth="2" />
            <path d="M23 9h12v14H23z" fill="#8b4f55" stroke="#5a3036" strokeWidth="2" />
          </svg>
        </button>
        <button aria-label="Network" className="mr-[24px]">
          <svg viewBox="0 0 42 34" className="h-[34px] w-[42px]" aria-hidden="true">
            <path d="M2 25h6v7H2zM10 20h6v12h-6zM18 14h6v18h-6zM26 8h6v24h-6zM34 2h6v30h-6z" fill="#fff" stroke="#5a3036" strokeWidth="2" />
          </svg>
        </button>
        <button aria-label="Volume" className="mr-[32px]">
          <svg viewBox="0 0 34 40" className="h-10 w-[34px]" aria-hidden="true">
            <path d="M2 12h7L18 2v36L9 29H2z" fill="#fff" stroke="#3a1f24" strokeWidth="2" />
            <path d="M27 11c5 5 5 13 0 18" fill="none" stroke="#f3dadb" strokeWidth="2" />
          </svg>
        </button>
        <button className="mr-[41px]">ENG</button>
        <button className="text-center">
          <span className="block">3:31 PM</span>
          <span className="block">2015-04-24</span>
        </button>
      </div>
    </footer>
  );
}

export default function App() {
  return (
    <div className={`flex h-screen flex-col overflow-hidden bg-white ${UI}`}>
      <TabStrip />
      <NavBar />
      <Report />
      <FindBar />
      <Taskbar />
    </div>
  );
}
